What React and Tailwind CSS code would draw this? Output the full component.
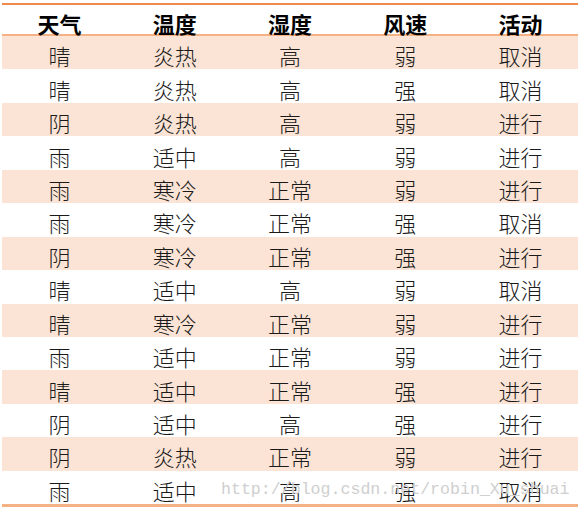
import React from "react";

const headers = ["天气", "温度", "湿度", "风速", "活动"];

const rows = [
  ["晴", "炎热", "高", "弱", "取消"],
  ["晴", "炎热", "高", "强", "取消"],
  ["阴", "炎热", "高", "弱", "进行"],
  ["雨", "适中", "高", "弱", "进行"],
  ["雨", "寒冷", "正常", "弱", "进行"],
  ["雨", "寒冷", "正常", "强", "取消"],
  ["阴", "寒冷", "正常", "强", "进行"],
  ["晴", "适中", "高", "弱", "取消"],
  ["晴", "寒冷", "正常", "弱", "进行"],
  ["雨", "适中", "正常", "弱", "进行"],
  ["晴", "适中", "正常", "强", "进行"],
  ["阴", "适中", "高", "强", "进行"],
  ["阴", "炎热", "正常", "弱", "进行"],
  ["雨", "适中", "高", "强", "取消"],
];

export default function App() {
  return (
    <div className="relative w-[582px] h-[511px] bg-white pt-[3px] px-[2px] font-['Noto_Sans_CJK_SC',sans-serif]">
      <div className="w-[576px] border-t-2 border-[#f08a4b] border-b-[3px] border-b-[#f4b183]">
        {/* header */}
        <div className="grid grid-cols-5 h-[31px] border-b-2 border-[#f4b183]">
          {headers.map((h) => (
            <div
              key={h}
              className="flex items-end justify-center text-[22px] leading-none font-bold text-black"
            >
              {h}
            </div>
          ))}
        </div>
        {/* body */}
        {rows.map((r, i) => (
          <div
            key={i}
            className={`grid grid-cols-5 h-[33.45px] ${i % 2 === 0 ? "bg-[#fbe4d5]" : "bg-white"}`}
          >
            {r.map((c, j) => (
              <div
                key={j}
                className="flex items-center justify-center pt-[5px] text-[22px] leading-none font-light text-[#1a1a1a]"
              >
                {c}
              </div>
            ))}
          </div>
        ))}
      </div>
      {/* watermark */}
      <div className="absolute left-[221px] top-[482px] font-['Liberation_Mono',monospace] text-[16.6px] leading-none text-[#cfcfcf] pointer-events-none">
        http://blog.csdn.net/robin_Xu_shuai
      </div>
    </div>
  );
}
